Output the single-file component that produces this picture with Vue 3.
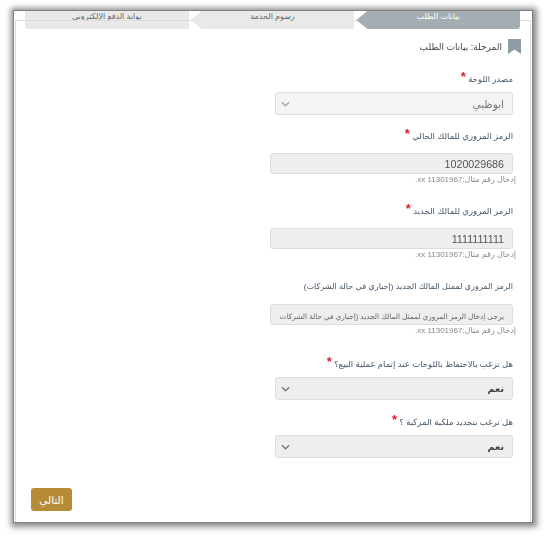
<template>
  <div class="frame" dir="rtl">
    <div class="steps">
      <div v-for="(step, i) in steps" :key="step" class="step" :class="{ active: i === 0, last: i === 2 }">
        {{ step }}
      </div>
    </div>

    <div class="panel">
      <div class="stage">
        <svg class="bookmark" viewBox="0 0 13 15" width="13" height="15">
          <path d="M0 0H13V15L6.5 10.5L0 15Z" fill="#8d9ba3" />
        </svg>
        <span>المرحلة: بيانات الطلب</span>
      </div>

      <div v-for="field in fields" :key="field.label" class="field" :style="{ marginTop: field.top + 'px' }">
        <label :class="{ tight: field.type === 'select', long: !field.required }">
          {{ field.label }}
          <span v-if="field.required" class="star">*</span>
        </label>

        <div v-if="field.type === 'select'" class="select" :class="{ muted: field.muted }">
          <span>{{ field.value }}</span>
          <svg viewBox="0 0 10 6" width="9" height="6">
            <path d="M1 1L5 5L9 1" fill="none" stroke="#777" stroke-width="1.5" />
          </svg>
        </div>

        <template v-else>
          <input class="text" :class="{ hinted: !field.value }" :value="field.value" :placeholder="field.placeholder" readonly />
          <div class="hint">إدخال رقم مثال:11301967 xx.</div>
        </template>
      </div>

      <button class="next">التالي</button>
    </div>
  </div>
</template>

<script setup>
const steps = ["بيانات الطلب", "رسوم الخدمة", "بوابة الدفع الإلكتروني"];

const fields = [
  { type: "select", label: "مصدر اللوحة", required: true, value: "ابوظبي", muted: true, top: 19 },
  { type: "input", label: "الرمز المروري للمالك الحالي", required: true, value: "1020029686", top: 15 },
  { type: "input", label: "الرمز المروري للمالك الجديد", required: true, value: "1111111111", top: 19 },
  {
    type: "input",
    label: "الرمز المروري لممثل المالك الجديد (إجباري في حالة الشركات)",
    value: "",
    placeholder: "يرجى إدخال الرمز المروري لممثل المالك الجديد (إجباري في حالة الشركات",
    top: 20,
  },
  { type: "select", label: "هل ترغب بالاحتفاظ باللوحات عند إتمام عملية البيع؟", required: true, value: "نعم", top: 21 },
  { type: "select", label: "هل ترغب بتجديد ملكية المركبة ؟", required: true, value: "نعم", top: 16 },
];
</script>

<style>
body {
  background: #fff;
  overflow: hidden;
}
</style>

<style scoped>
.frame {
  box-sizing: border-box;
  width: 518px;
  height: 511px;
  margin: 11px 12px 15px 14px;
  background: #fff;
  box-shadow: 0 0 0 1px #808080, 1px 1px 6px 4px #8a8a8a;
  font-family: "Liberation Sans", "DejaVu Sans", sans-serif;
  color: #555;
  filter: blur(0.35px);
}

.steps {
  display: flex;
  gap: 2px;
  height: 18px;
  padding: 0 12px 0 11px;
}

.step {
  flex: 1;
  position: relative;
  z-index: 1;
  background: #e9e9e9;
  color: #666;
  font-size: 8px;
  line-height: 12px;
  text-align: center;
  clip-path: polygon(100% 0, 100% 100%, 11px 100%, 0 50%, 11px 0);
}

.step.active {
  background: #a3adb2;
  color: #fff;
  border-bottom-right-radius: 3px;
}

.step.last {
  z-index: auto;
  clip-path: none;
  border-bottom-left-radius: 3px;
}

.panel {
  box-sizing: border-box;
  height: 502px;
  margin: -9px 1px 0 1px;
  padding: 0 17px 0 0;
  border: 1px solid #ddd;
  border-bottom: 0;
  position: relative;
}

.stage {
  display: flex;
  align-items: center;
  gap: 6px;
  height: 15px;
  margin: 18px -8px 0 0;
  font-size: 9px;
  color: #444;
}

.bookmark {
  flex: none;
}

.field {
  display: flex;
  flex-direction: column;
  align-items: flex-start;
}

label {
  height: 12px;
  line-height: 12px;
  margin-bottom: 11px;
  font-size: 8.5px;
  color: #44586a;
  white-space: nowrap;
}

label.tight {
  margin-bottom: 7px;
}

label.long {
  font-size: 8.1px;
}

.star {
  color: #e01b24;
  font-size: 13px;
  font-weight: 700;
  line-height: 8px;
  vertical-align: 1px;
}

.select {
  box-sizing: border-box;
  display: flex;
  align-items: center;
  justify-content: space-between;
  width: 238px;
  height: 23px;
  padding: 0 8px 0 5px;
  background: #eee;
  border: 1px solid #ddd;
  border-radius: 3px;
  font-size: 9.5px;
  font-weight: 700;
  color: #444;
}

.select.muted {
  background: #f4f4f4;
  color: #777;
  font-size: 10.5px;
  font-weight: 400;
}

.select.muted svg {
  opacity: 0.6;
}

.text {
  box-sizing: border-box;
  width: 243px;
  height: 21px;
  padding: 0 8px;
  background: #eee;
  border: 1px solid #ddd;
  border-radius: 3px;
  font-family: inherit;
  font-size: 10.7px;
  color: #555;
  text-align: right;
  outline: none;
}

.text.hinted::placeholder {
  font-size: 7.3px;
  color: #666;
  opacity: 1;
}

.hint {
  height: 12px;
  line-height: 12px;
  margin-right: -3px;
  font-size: 8px;
  color: #888;
  white-space: nowrap;
}

.next {
  position: absolute;
  left: 15px;
  top: 467px;
  width: 41px;
  height: 23px;
  padding: 0;
  background: #b58b35;
  border: 0;
  border-radius: 3px;
  font-family: inherit;
  font-size: 10.5px;
  color: #fff;
}
</style>
